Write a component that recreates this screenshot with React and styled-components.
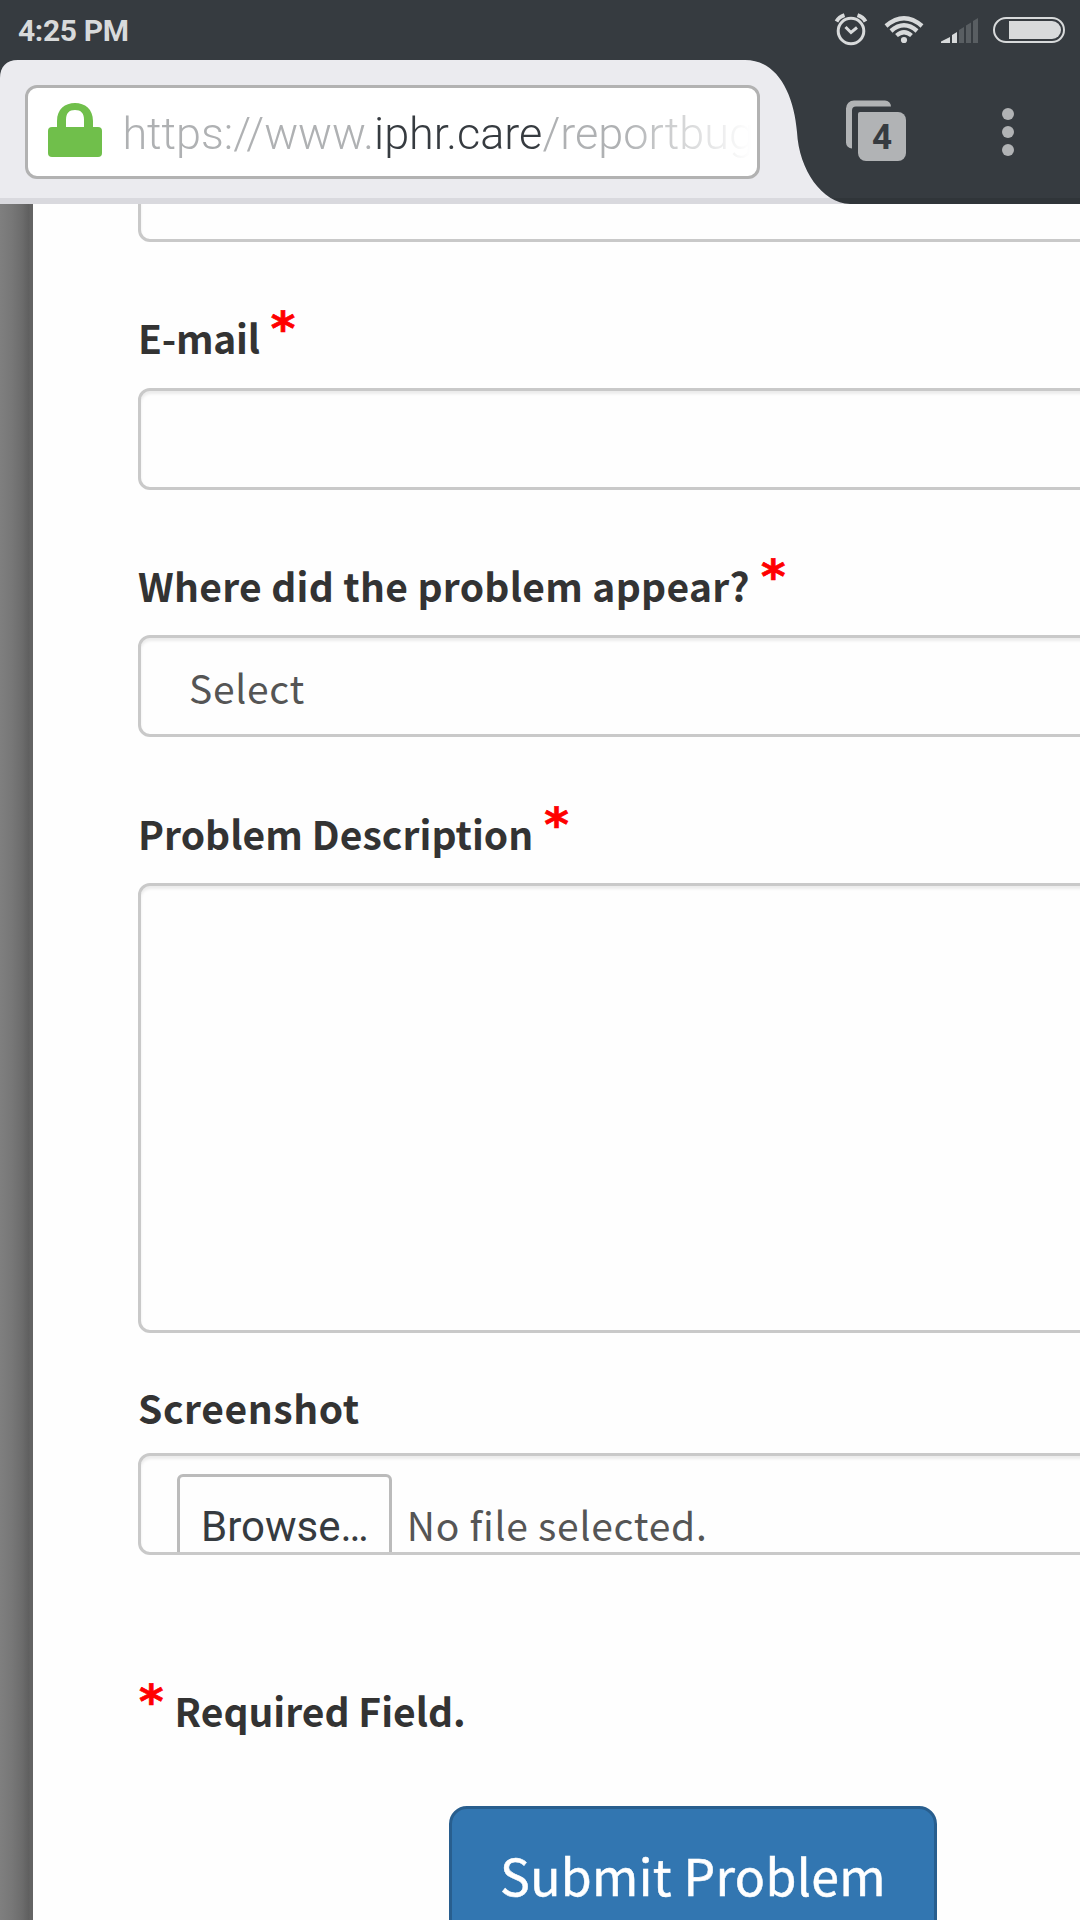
import React from "react";
import styled, { createGlobalStyle } from "styled-components";

const GlobalStyle = createGlobalStyle`
  * { box-sizing: border-box; }
  body { margin: 0; background: #fff; overflow: hidden; }
`;

const Screen = styled.div`
  width: 1080px;
  height: 1920px;
  overflow: hidden;
  display: flex;
  flex-direction: column;
  background: #fefefe;
  font-family: "Noto Sans CJK JP", "Noto Sans", sans-serif;
`;

const StatusBar = styled.header`
  height: 60px;
  flex: none;
  display: flex;
  align-items: center;
  padding: 0 15px 0 18px;
  background: #363b40;
`;

const Clock = styled.span`
  flex: 1;
  padding-top: 2px;
  font: 700 30px/36px Roboto, sans-serif;
  letter-spacing: -0.35px;
  color: #d8dadb;
`;

const StatusIcons = styled.svg`
  display: block;
  flex: none;
`;

const Toolbar = styled.nav`
  height: 144px;
  flex: none;
  display: grid;
  grid-template-columns: 850px 230px;
  background: linear-gradient(#363b40 138px, #303539 138px);
`;

const Tab = styled.div`
  padding: 25px 0 0 25px;
  background: linear-gradient(#ebebef 138px, #d9d9de 138px);
  clip-path: path("M0 18 C0 7 6 0 18 0 L745 0 C778 0 794 35 797 72 C799 110 822 143 850 144 L0 144 Z");
`;

const UrlField = styled.div`
  width: 735px;
  height: 94px;
  border: 3px solid #b2b2b2;
  border-radius: 12px;
  background: #fff;
  display: flex;
  padding: 0 3px 0 20px;
`;

const LockIcon = styled.svg`
  display: block;
  flex: none;
  margin-top: 15px;
`;

const UrlText = styled.div`
  flex: 1;
  margin-left: 20.4px;
  padding-top: 4px;
  white-space: nowrap;
  font: 300 45px/84px Roboto, sans-serif;
  color: #afb1b3;
  mask-image: linear-gradient(to right, #000 500px, transparent 629px);
`;

const Domain = styled.span`
  color: #363b40;
`;

const Actions = styled.div`
  display: flex;
`;

const ToolIcon = styled.svg`
  display: block;
  overflow: visible;
`;

const Viewport = styled.main`
  flex: 1;
  min-height: 0;
  display: flex;
`;

const Backdrop = styled.div`
  width: 33px;
  flex: none;
  background: linear-gradient(to right, #7f7f7f 0, #777 12px, #6c6c6c 22px, #5f5f5f 29px, #646464 30px, #646464 33px);
`;

const Form = styled.form`
  flex: 1;
  min-width: 0;
  overflow: hidden;
  padding-left: 105px;
  display: flex;
  flex-direction: column;
  background: #fefefe;
`;

const LabelRow = styled.label`
  flex: none;
  display: flex;
  align-items: flex-start;
  gap: 11px;
  margin: ${(p) => p.$above}px 0 ${(p) => p.$below}px ${(p) => p.$indent || 0}px;
`;

const LabelText = styled.span`
  margin-top: ${(p) => (p.$plain ? 0 : 8)}px;
  font-size: 39px;
  line-height: 56px;
  font-weight: 700;
  letter-spacing: ${(p) => p.$spacing || 0}px;
  white-space: nowrap;
  color: #333;
`;

const Star = styled.span`
  font: 700 47px/55px "DejaVu Sans", sans-serif;
  -webkit-text-stroke: 0.7px #f00;
  color: #f00;
`;

const field = `
  display: block;
  flex: none;
  width: 1000px;
  margin: 0;
  border: 3px solid #c9c9c9;
  border-radius: 12px;
  background: #fefefe;
  box-shadow: inset 0 3px 3px rgba(0, 0, 0, 0.075);
  outline: none;
`;

const TextInput = styled.input`
  ${field}
  height: 102px;
  margin-top: ${(p) => p.$shift || 0}px;
`;

const TextArea = styled.textarea`
  ${field}
  height: 450px;
  resize: none;
`;

const SelectBox = styled.div`
  ${field}
  height: 102px;
  padding: 21px 0 0 48px;
`;

const FieldText = styled.span`
  display: block;
  font-size: 39px;
  line-height: 56px;
  letter-spacing: ${(p) => p.$spacing}px;
  white-space: nowrap;
  color: #555;
`;

const FileField = styled.div`
  ${field}
  display: flex;
  align-items: flex-start;
  height: 102px;
  padding: 18px 0 0 36px;
  overflow: hidden;
`;

const BrowseButton = styled.button`
  flex: none;
  width: 215px;
  height: 104px;
  margin: 0 14.7px 0 0;
  padding: 25px 0 0 21px;
  display: flex;
  align-items: flex-start;
  border: 3px solid #bbb;
  border-radius: 6px;
  background: #fefefe;
  font: 400 42px/49px Roboto, sans-serif;
  color: #363b40;
`;

const FileName = styled(FieldText)`
  margin-top: 22px;
`;

const SubmitButton = styled.button`
  flex: none;
  width: 488px;
  height: 150px;
  margin: 0 0 0 311px;
  padding: 29px 0 0;
  display: flex;
  justify-content: center;
  align-items: flex-start;
  border: 3px solid #285e8e;
  border-radius: 18px;
  background: #3276b1;
  font: 400 50px/72px "Noto Sans CJK JP", "Noto Sans", sans-serif;
  letter-spacing: 0.35px;
  -webkit-text-stroke: 0.5px #fff;
  white-space: nowrap;
  color: #fff;
`;

const Count = styled.text`
  font: 700 35px Roboto, sans-serif;
  fill: #363b40;
`;

function StatusGlyphs() {
  return (
    <StatusIcons width="232" height="60" viewBox="833 0 232 60" fill="none" stroke="#d8dadb">
      <circle cx="851" cy="31" r="12.800" strokeWidth="3" />
      <path d="M845.500 27l5.500 5.500 6-5" strokeWidth="3" />
      <path d="M836.500 21.500Q839 17 844.500 15.200M865.500 21.500Q863 17 857.500 15.200" strokeWidth="4" />
      <path d="M886 26Q904 10.500 922 26" strokeWidth="4.400" />
      <path d="M891 31Q904 19.500 917 31" strokeWidth="4.400" />
      <path d="M896.500 35.500Q904 29 911.500 35.500" strokeWidth="4.200" />
      <circle cx="904" cy="40" r="3.100" fill="#d8dadb" stroke="none" />
      <path d="M941 43v-1.500l9-4.500v6zM952 43v-8l5-3v11z" fill="#d8dadb" stroke="none" />
      <path d="M959 43V30l5-3v16zM966 43V25.500l5-3V43zM973 43V21l5-3v25z" fill="#595e62" stroke="none" />
      <rect x="994" y="18" width="70" height="24" rx="12" strokeWidth="2" />
      <path d="M1009 21h43a9 9 0 0 1 0 18h-43z" fill="#d8dadb" stroke="none" />
    </StatusIcons>
  );
}

function Required() {
  return <Star>*</Star>;
}

export default function App() {
  return (
    <Screen>
      <GlobalStyle />
      <StatusBar>
        <Clock>4:25 PM</Clock>
        <StatusGlyphs />
      </StatusBar>
      <Toolbar>
        <Tab>
          <UrlField>
            <LockIcon width="54" height="54" viewBox="0 0 54 54" fill="#70bf4b">
              <path d="M9 26V18C9 6 17 0 27 0s18 6 18 18v8h-9V17c0-7-3-10-9-10s-9 3-9 10v9z" />
              <rect y="24" width="54" height="30" rx="4" />
            </LockIcon>
            <UrlText>
              https://www.<Domain>iphr.care</Domain>/reportbug
            </UrlText>
          </UrlField>
        </Tab>
        <Actions>
          <ToolIcon width="230" height="144" viewBox="850 60 230 144">
            <path d="M852 148.500a6 6 0 0 1-6-6v-34a8 8 0 0 1 8-8h31a6 6 0 0 1 6 6h-35a4 4 0 0 0-4 4z" fill="#b1b3b5" />
            <path d="M860 112h38a8 8 0 0 1 8 8v33a8 8 0 0 1-8 8h-32a8 8 0 0 1-8-8v-39a2 2 0 0 1 2-2z" fill="#b1b3b5" />
            <Count x="882" y="149" textAnchor="middle">4</Count>
            <circle cx="1008" cy="114" r="6" fill="#b1b3b5" />
            <circle cx="1008" cy="132" r="6" fill="#b1b3b5" />
            <circle cx="1008" cy="150" r="6" fill="#b1b3b5" />
          </ToolIcon>
        </Actions>
      </Toolbar>
      <Viewport>
        <Backdrop />
        <Form onSubmit={(e) => e.preventDefault()}>
          <TextInput $shift={-64} />
          <LabelRow $above={59} $below={23}>
            <LabelText $spacing={-0.25}>E-mail</LabelText>
            <Required />
          </LabelRow>
          <TextInput />
          <LabelRow $above={59} $below={22}>
            <LabelText $spacing={0.3}>Where did the problem appear?</LabelText>
            <Required />
          </LabelRow>
          <SelectBox>
            <FieldText $spacing={0.7}>Select</FieldText>
          </SelectBox>
          <LabelRow $above={60} $below={22}>
            <LabelText $spacing={0.05}>Problem Description</LabelText>
            <Required />
          </LabelRow>
          <TextArea />
          <LabelRow $above={46} $below={18}>
            <LabelText $plain $spacing={0.6}>Screenshot</LabelText>
          </LabelRow>
          <FileField>
            <BrowseButton type="button">Browse…</BrowseButton>
            <FileName $spacing={0.75}>No file selected.</FileName>
          </FileField>
          <LabelRow $above={119} $below={68} $indent={1}>
            <Required />
            <LabelText>Required Field.</LabelText>
          </LabelRow>
          <SubmitButton type="submit">Submit Problem</SubmitButton>
        </Form>
      </Viewport>
    </Screen>
  );
}
